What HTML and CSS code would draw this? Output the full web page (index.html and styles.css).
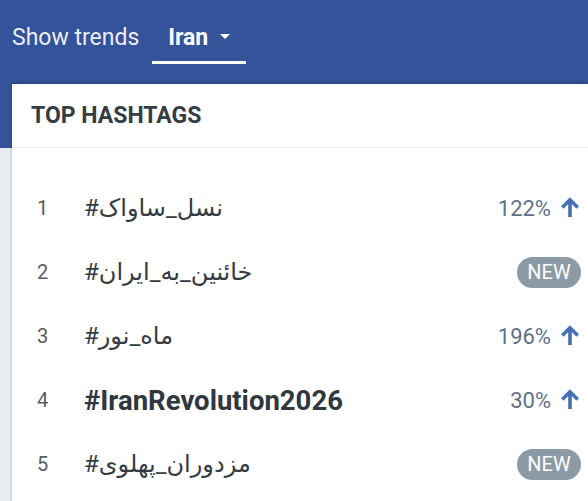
FILE: index.html
```html
<!DOCTYPE html>
<html>
<head>
<meta charset="utf-8">
<link rel="stylesheet" href="styles.css">
</head>
<body>
<div class="hero">
  <div class="topbar">
    <span class="label">Show trends</span>
    <div class="tab">Iran <span class="caret"></span></div>
  </div>
</div>
<div class="card">
  <div class="card-head">TOP HASHTAGS</div>
  <ul class="list">
    <li class="row"><span class="rank">1</span><span class="tag">#نسل_ساواک</span><span class="trend">122%<svg class="arrow" viewBox="0 0 22 24"><path d="M11 23V5M2.5 12.5L11 4l8.5 8.5"/></svg></span></li>
    <li class="row"><span class="rank">2</span><span class="tag">#خائنین_به_ایران</span><span class="badge">NEW</span></li>
    <li class="row"><span class="rank">3</span><span class="tag">#ماه_نور</span><span class="trend">196%<svg class="arrow" viewBox="0 0 22 24"><path d="M11 23V5M2.5 12.5L11 4l8.5 8.5"/></svg></span></li>
    <li class="row"><span class="rank">4</span><span class="tag tag-bold">#IranRevolution2026</span><span class="trend">30%<svg class="arrow" viewBox="0 0 22 24"><path d="M11 23V5M2.5 12.5L11 4l8.5 8.5"/></svg></span></li>
    <li class="row"><span class="rank">5</span><span class="tag">#مزدوران_پهلوی</span><span class="badge">NEW</span></li>
  </ul>
</div>
</body>
</html>
```

FILE: styles.css
```css
html, body {
  margin: 0;
  padding: 0;
}
body {
  background: #e9ecef;
  font-family: Roboto, "DejaVu Sans", sans-serif;
  width: 588px;
  height: 501px;
  overflow: hidden;
}
.hero {
  background: #35539a;
  height: 148px;
}
.topbar {
  display: flex;
  align-items: stretch;
  padding: 14px 0 0 12px;
  height: 50px;
  color: #fff;
}
.label {
  font-size: 23px;
  line-height: 47px;
  color: rgba(255,255,255,0.92);
}
.tab {
  margin-left: 13px;
  padding: 0 16px;
  border-bottom: 3px solid #fff;
  font-size: 23px;
  font-weight: 700;
  line-height: 47px;
  display: flex;
  align-items: center;
  gap: 12px;
}
.caret {
  width: 0;
  height: 0;
  border-left: 5px solid transparent;
  border-right: 5px solid transparent;
  border-top: 5px solid #fff;
  margin-top: -3px;
}
.card {
  margin: -64px 0 0 12px;
  background: #fff;
  box-shadow: 0 -1px 3px rgba(0,0,0,0.25);
  height: 430px;
}
.card-head {
  height: 63px;
  padding-left: 19px;
  border-bottom: 1px solid #eceef0;
  font-size: 23px;
  font-weight: 700;
  color: #343c44;
  line-height: 64px;
}
.list {
  list-style: none;
  margin: 0;
  padding: 28px 8px 0 0;
}
.row {
  display: flex;
  align-items: center;
  height: 64px;
}
.rank {
  width: 72px;
  padding-left: 25px;
  box-sizing: border-box;
  font-size: 20px;
  color: #585d62;
}
.tag {
  flex: 1;
  font-size: 24px;
  color: #353b42;
}
.tag-bold {
  font-size: 27.5px;
  font-weight: 700;
  color: #30373e;
}
.trend {
  display: flex;
  align-items: center;
  font-size: 22px;
  color: #5e7188;
}
.arrow {
  width: 20px;
  height: 22px;
  fill: none;
  stroke: #4a6fb8;
  stroke-width: 4;
  margin-left: 9px;
  margin-top: -2px;
}
.badge {
  width: 64px;
  height: 31px;
  border-radius: 16px;
  background: #8b9aa4;
  color: #fff;
  font-size: 20px;
  line-height: 31px;
  text-align: center;
  margin-right: -1px;
}
```
